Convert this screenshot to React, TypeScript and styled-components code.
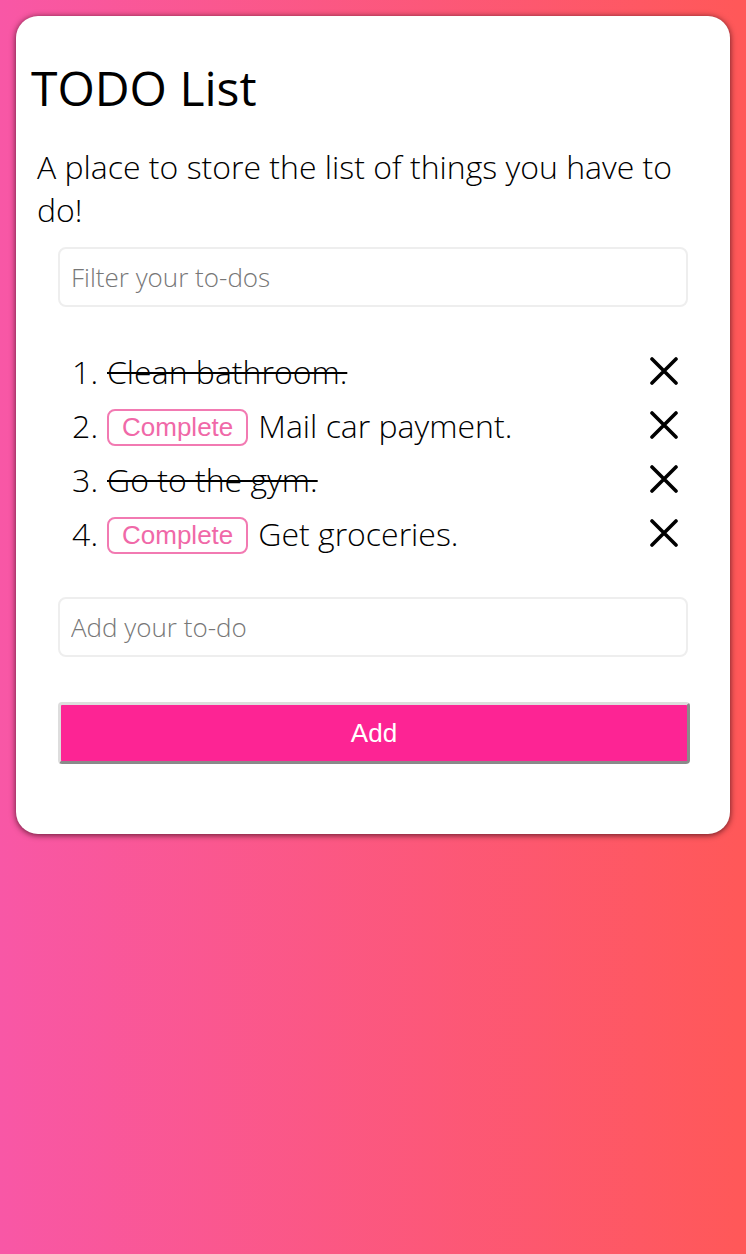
import React, { useState } from 'react'
import styled, { createGlobalStyle } from 'styled-components'

const GlobalStyle = createGlobalStyle`
  html, body {
    margin: 0;
    height: 100%;
  }
  body {
    background: linear-gradient(to right, #f857a6, #ff5858);
    font-family: 'Open Sans', 'Noto Sans', sans-serif;
  }
  #root {
    padding: 16px;
  }
`

const Card = styled.div`
  background: #fff;
  border-radius: 22px;
  box-shadow: 0 1px 6px rgba(40, 0, 10, 0.75);
  padding: 39px 42px 70px 42px;
`

const Title = styled.h1`
  margin: 0 0 25px -27px;
  font-size: 48px;
  font-weight: 400;
  color: #000;
`

const Intro = styled.p`
  margin: 0 0 16px -21px;
  font-size: 32px;
  font-weight: 300;
  color: #000;
`

const TextInput = styled.input`
  display: block;
  width: 100%;
  box-sizing: border-box;
  border: 2px solid #eee;
  border-radius: 8px;
  padding: 10px 11px;
  font-family: 'Open Sans', sans-serif;
  font-size: 26px;
  font-weight: 300;
  outline: none;
  &::placeholder {
    color: #777;
  }
`

const List = styled.ol`
  list-style: none;
  margin: 37px 0 37px;
  padding: 0;
`

const Item = styled.li`
  display: flex;
  align-items: center;
  height: 54px;
  font-size: 32px;
  font-weight: 300;
  color: #000;
`

const Num = styled.span`
  width: 40px;
  flex-shrink: 0;
  text-align: right;
  margin-right: 9px;
`

const Label = styled.span<{ $done: boolean }>`
  flex: 1;
  white-space: nowrap;
  text-decoration: ${(p) => (p.$done ? 'line-through' : 'none')};
  text-decoration-thickness: 2px;
`

const CompleteButton = styled.button`
  font-family: 'Liberation Sans', Arial, sans-serif;
  font-size: 26px;
  color: #f069a8;
  background: #fff;
  border: 2px solid #f27ab2;
  border-radius: 8px;
  padding: 1px 13px;
  margin-right: 10px;
  vertical-align: 2px;
  cursor: pointer;
`

const RemoveButton = styled.button`
  background: none;
  border: none;
  padding: 0;
  margin-right: 9px;
  width: 30px;
  height: 30px;
  display: flex;
  align-items: center;
  justify-content: center;
  cursor: pointer;
`

const AddButton = styled.button`
  display: block;
  width: calc(100% + 2px);
  margin-top: 45px;
  height: 62px;
  background: #fd2494;
  color: #fff;
  font-family: 'Liberation Sans', Arial, sans-serif;
  font-size: 26px;
  border-style: solid;
  border-width: 3px;
  border-color: #ddd #8a8a8a #8a8a8a #ddd;
  border-radius: 4px;
  cursor: pointer;
`

const Cross = () => (
  <svg width="28" height="28" viewBox="0 0 28 28">
    <path d="M2 2 L26 26 M26 2 L2 26" stroke="#000" strokeWidth="3.6" strokeLinecap="round" />
  </svg>
)

interface Todo {
  text: string
  done: boolean
}

export default function App() {
  const [todos, setTodos] = useState<Todo[]>([
    { text: 'Clean bathroom.', done: true },
    { text: 'Mail car payment.', done: false },
    { text: 'Go to the gym.', done: true },
    { text: 'Get groceries.', done: false }
  ])
  const [filter, setFilter] = useState('')
  const [draft, setDraft] = useState('')

  const visible = todos.filter((t) => t.text.toLowerCase().includes(filter.toLowerCase()))

  return (
    <>
      <GlobalStyle />
      <Card>
        <Title>TODO List</Title>
        <Intro>A place to store the list of things you have to do!</Intro>
        <TextInput
          placeholder="Filter your to-dos"
          value={filter}
          onChange={(e) => setFilter(e.target.value)}
        />
        <List>
          {visible.map((todo, i) => (
            <Item key={todo.text}>
              <Num>{i + 1}.</Num>
              <Label $done={todo.done}>
                {!todo.done && (
                  <CompleteButton
                    onClick={() =>
                      setTodos(todos.map((t) => (t === todo ? { ...t, done: true } : t)))
                    }
                  >
                    Complete
                  </CompleteButton>
                )}
                {todo.text}
              </Label>
              <RemoveButton onClick={() => setTodos(todos.filter((t) => t !== todo))}>
                <Cross />
              </RemoveButton>
            </Item>
          ))}
        </List>
        <TextInput
          placeholder="Add your to-do"
          value={draft}
          onChange={(e) => setDraft(e.target.value)}
        />
        <AddButton
          onClick={() => {
            if (draft.trim()) {
              setTodos([...todos, { text: draft.trim(), done: false }])
              setDraft('')
            }
          }}
        >
          Add
        </AddButton>
      </Card>
    </>
  )
}
